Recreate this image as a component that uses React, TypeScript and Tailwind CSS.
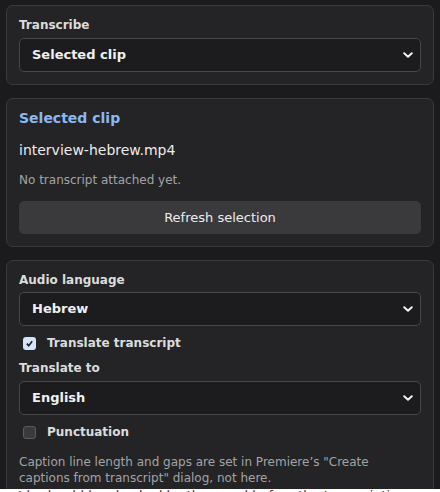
import React from "react";

const font = { fontFamily: '"DejaVu Sans", "Noto Sans", sans-serif' };

function Chevron() {
  return (
    <svg
      viewBox="0 0 10 6"
      className="pointer-events-none absolute right-[8px] top-1/2 h-[6px] w-[10px] -translate-y-1/2"
      fill="none"
      stroke="#f2f2f2"
      strokeWidth="1.9"
      strokeLinecap="round"
      strokeLinejoin="round"
    >
      <path d="M1.2 1.2 5 4.8 8.8 1.2" />
    </svg>
  );
}

function Select({ value }: { value: string }) {
  return (
    <div className="relative">
      <select
        defaultValue={value}
        className="block h-[34px] w-full appearance-none rounded-[5px] border border-[#48484b] bg-[#1c1c1e] pl-[12px] text-[13px] font-bold text-[#f0f0f0] outline-none"
      >
        <option>{value}</option>
      </select>
      <Chevron />
    </div>
  );
}

function Label({ children }: { children: React.ReactNode }) {
  return <div className="text-[12px] font-bold leading-[16px] text-[#dcdcdc]">{children}</div>;
}

function Check({ checked, label }: { checked?: boolean; label: string }) {
  return (
    <label className="flex h-[26px] items-center gap-[11px] pl-[4px]">
      {checked ? (
        <span className="flex h-[13px] w-[13px] items-center justify-center rounded-[3px] bg-[#d6e4fb]">
          <svg viewBox="0 0 10 10" className="h-[9px] w-[9px]" fill="none" stroke="#1d1d1f" strokeWidth="1.8">
            <path d="M2 5.2 4.1 7.4 8 2.6" />
          </svg>
        </span>
      ) : (
        <span className="h-[13px] w-[13px] rounded-[3px] border border-[#5c5c60] bg-[#3a3a3d]" />
      )}
      <span className="text-[12px] font-bold text-[#dcdcdc]">{label}</span>
    </label>
  );
}

function Card({ children, className = "" }: { children: React.ReactNode; className?: string }) {
  return (
    <section className={`rounded-[7px] border border-[#3a3a3d] bg-[#242426] px-[12px] ${className}`}>
      {children}
    </section>
  );
}

export default function App() {
  return (
    <div style={font} className="min-h-[492px] bg-white">
      <div className="flex h-[489px] flex-col gap-[13px] overflow-hidden bg-[#1b1b1d] px-[6px] pt-[5px]">
        {/* Transcribe */}
        <Card className="pb-[12px] pt-[11px]">
          <Label>Transcribe</Label>
          <div className="mt-[5px]">
            <Select value="Selected clip" />
          </div>
        </Card>

        {/* Selected clip */}
        <Card className="pb-[12px] pt-[9px]">
          <h2 className="text-[14px] font-bold leading-[20px] text-[#8ab8f0]">Selected clip</h2>
          <div className="mt-[14px] text-[14px] leading-[17px] text-[#ececec]">interview-hebrew.mp4</div>
          <div className="mt-[14px] text-[12px] leading-[15px] text-[#a3a3a6]">No transcript attached yet.</div>
          <button className="mt-[13px] h-[33px] w-full rounded-[5px] bg-[#3a3a3d] text-[13px] text-[#ececec]">
            Refresh selection
          </button>
        </Card>

        {/* Language options */}
        <Card className="shrink-0 pb-[12px] pt-[11px]">
          <Label>Audio language</Label>
          <div className="mt-[4px]">
            <Select value="Hebrew" />
          </div>
          <div className="mt-[4px]">
            <Check checked label="Translate transcript" />
          </div>
          <div className="mt-[4px]">
            <Label>Translate to</Label>
          </div>
          <div className="mt-[5px]">
            <Select value="English" />
          </div>
          <div className="mt-[4px]">
            <Check label="Punctuation" />
          </div>
          <p className="mt-[9px] text-[12px] leading-[16px] text-[#a3a3a6]">
            Caption line length and gaps are set in Premiere’s "Create captions from transcript" dialog, not here.
          </p>
        </Card>
      </div>
      <div className="px-[18px] text-[13px] leading-[13px] text-[#7a1d1d]">
        Ids should be checked by the panel before the transcription job is launched
      </div>
    </div>
  );
}
